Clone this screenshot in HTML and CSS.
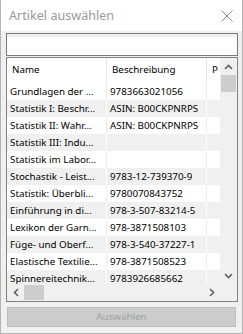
FILE: index.html
```html
<!DOCTYPE html>
<html lang="de">
<head>
    <meta charset="UTF-8">
    <title>Artikel auswählen</title>
    <link rel="stylesheet" href="styles.css">
</head>
<body>
    <div class="fenster">
        <div class="titel">
            <span class="titel-text">Artikel auswählen</span>
            <svg class="schliessen" width="12" height="12" viewBox="0 0 12 12">
                <path d="M0.5 0.5 L11.5 11.5 M11.5 0.5 L0.5 11.5" stroke="#8a8a8a" stroke-width="1" fill="none"/>
            </svg>
        </div>

        <div class="inhalt">
            <div class="suche"></div>

            <div class="liste">
                <div class="tabelle">
                    <div class="kopf">
                        <div class="zelle">Name</div>
                        <div class="zelle">Beschreibung</div>
                        <div class="zelle">P</div>
                    </div>
                    <div class="zeile"><div class="zelle">Grundlagen der ...</div><div class="zelle">9783663021056</div><div class="zelle"></div></div>
                    <div class="zeile"><div class="zelle">Statistik I: Beschr...</div><div class="zelle">ASIN: B00CKPNRPS</div><div class="zelle"></div></div>
                    <div class="zeile"><div class="zelle">Statistik II: Wahr...</div><div class="zelle">ASIN: B00CKPNRPS</div><div class="zelle"></div></div>
                    <div class="zeile"><div class="zelle">Statistik III: Indu...</div><div class="zelle"></div><div class="zelle"></div></div>
                    <div class="zeile"><div class="zelle">Statistik im Labor...</div><div class="zelle"></div><div class="zelle"></div></div>
                    <div class="zeile"><div class="zelle">Stochastik - Leist...</div><div class="zelle">9783-12-739370-9</div><div class="zelle"></div></div>
                    <div class="zeile"><div class="zelle">Statistik: Überbli...</div><div class="zelle">9780070843752</div><div class="zelle"></div></div>
                    <div class="zeile"><div class="zelle">Einführung in di...</div><div class="zelle">978-3-507-83214-5</div><div class="zelle"></div></div>
                    <div class="zeile"><div class="zelle">Lexikon der Garn...</div><div class="zelle">978-3871508103</div><div class="zelle"></div></div>
                    <div class="zeile"><div class="zelle">Füge- und Oberf...</div><div class="zelle">978-3-540-37227-1</div><div class="zelle"></div></div>
                    <div class="zeile"><div class="zelle">Elastische Textilie...</div><div class="zelle">978-3871508523</div><div class="zelle"></div></div>
                    <div class="zeile"><div class="zelle">Spinnereitechnik...</div><div class="zelle">9783926685662</div><div class="zelle"></div></div>
                </div>

                <!-- senkrechte Bildlaufleiste -->
                <div class="vscroll">
                    <div class="pfeil">
                        <svg width="9" height="6" viewBox="0 0 9 6"><path d="M1 5 L4.5 1.5 L8 5" stroke="#606060" stroke-width="1.6" fill="none"/></svg>
                    </div>
                    <div class="vdaumen"></div>
                    <div class="spur"></div>
                    <div class="pfeil">
                        <svg width="9" height="6" viewBox="0 0 9 6"><path d="M1 1 L4.5 4.5 L8 1" stroke="#606060" stroke-width="1.6" fill="none"/></svg>
                    </div>
                </div>

                <!-- waagerechte Bildlaufleiste -->
                <div class="hscroll">
                    <div class="pfeil">
                        <svg width="6" height="9" viewBox="0 0 6 9"><path d="M5 1 L1.5 4.5 L5 8" stroke="#606060" stroke-width="1.6" fill="none"/></svg>
                    </div>
                    <div class="hdaumen"></div>
                    <div class="spur"></div>
                    <div class="pfeil">
                        <svg width="6" height="9" viewBox="0 0 6 9"><path d="M1 1 L4.5 4.5 L1 8" stroke="#606060" stroke-width="1.6" fill="none"/></svg>
                    </div>
                </div>
                <div class="ecke"></div>
            </div>

            <div class="knopf">Auswählen</div>
        </div>
    </div>
</body>
</html>
```

FILE: styles.css
```css
body {
    margin: 0;
    padding: 0;
    font-family: "Noto Sans", "Liberation Sans", sans-serif;
    font-size: 9.8px;
    color: #000;
}

.fenster {
    width: 243px;
    height: 334px;
    box-sizing: border-box;
    background: #f0f0f0;
    border-left: 1px solid #b4b4b4;
    border-right: 1px solid #b4b4b4;
    border-bottom: 1px solid #b4b4b4;
    display: flex;
    flex-direction: column;
}

.titel {
    height: 31px;
    background: #fff;
    display: flex;
    align-items: center;
    justify-content: space-between;
    padding: 0 9px 0 8px;
}

.titel-text {
    font-size: 12.6px;
    color: #9a9a9a;
    padding-bottom: 1px;
}

.schliessen {
    margin-top: 1px;
}

.inhalt {
    padding: 2px 4px 0 5px;
    display: flex;
    flex-direction: column;
}

/* Suchfeld */
.suche {
    height: 23px;
    box-sizing: border-box;
    border: 1px solid #7a7a7a;
    background: #fff;
    box-shadow: inset 0 3px 0 #f0f0f0;
}

/* Listenansicht */
.liste {
    margin-top: 1px;
    height: 245px;
    box-sizing: border-box;
    border: 1px solid #828282;
    background: #fff;
    display: grid;
    grid-template-columns: 213px 17px;
    grid-template-rows: 226px 17px;
}

.tabelle {
    overflow: hidden;
}

.kopf, .zeile {
    display: grid;
    grid-template-columns: 100px 100px 100px;
}

.kopf {
    height: 25px;
    background: #fff;
}

.kopf .zelle {
    line-height: 24px;
    padding-left: 5px;
    border-right: 1px solid #e5e5e5;
}

.zeile {
    height: 17px;
}

.zeile:nth-child(odd) {
    background: #f0f0f0;
}

.zelle {
    box-sizing: border-box;
    white-space: nowrap;
    overflow: hidden;
    padding-left: 3px;
    line-height: 17px;
    border-right: 1px solid #ececec;
}

.zeile:nth-child(odd) .zelle {
    border-right-color: #fff;
}

/* Bildlaufleisten */
.vscroll, .hscroll, .ecke {
    background: #f0f0f0;
}

.vscroll {
    display: flex;
    flex-direction: column;
}

.hscroll {
    display: flex;
}

.pfeil {
    flex: 0 0 17px;
    height: 17px;
    display: flex;
    align-items: center;
    justify-content: center;
}

.spur {
    flex: 1;
}

.vdaumen {
    height: 17px;
    margin: 0 1px;
    background: #cdcdcd;
}

.hdaumen {
    width: 20px;
    margin: 1px 0;
    background: #cdcdcd;
}

/* Knopf */
.knopf {
    margin: 5px 2px 0 1px;
    height: 20px;
    box-sizing: border-box;
    border: 1px solid #bfbfbf;
    background: #cccccc;
    color: #a0a0a0;
    text-align: center;
    line-height: 18px;
}
```
